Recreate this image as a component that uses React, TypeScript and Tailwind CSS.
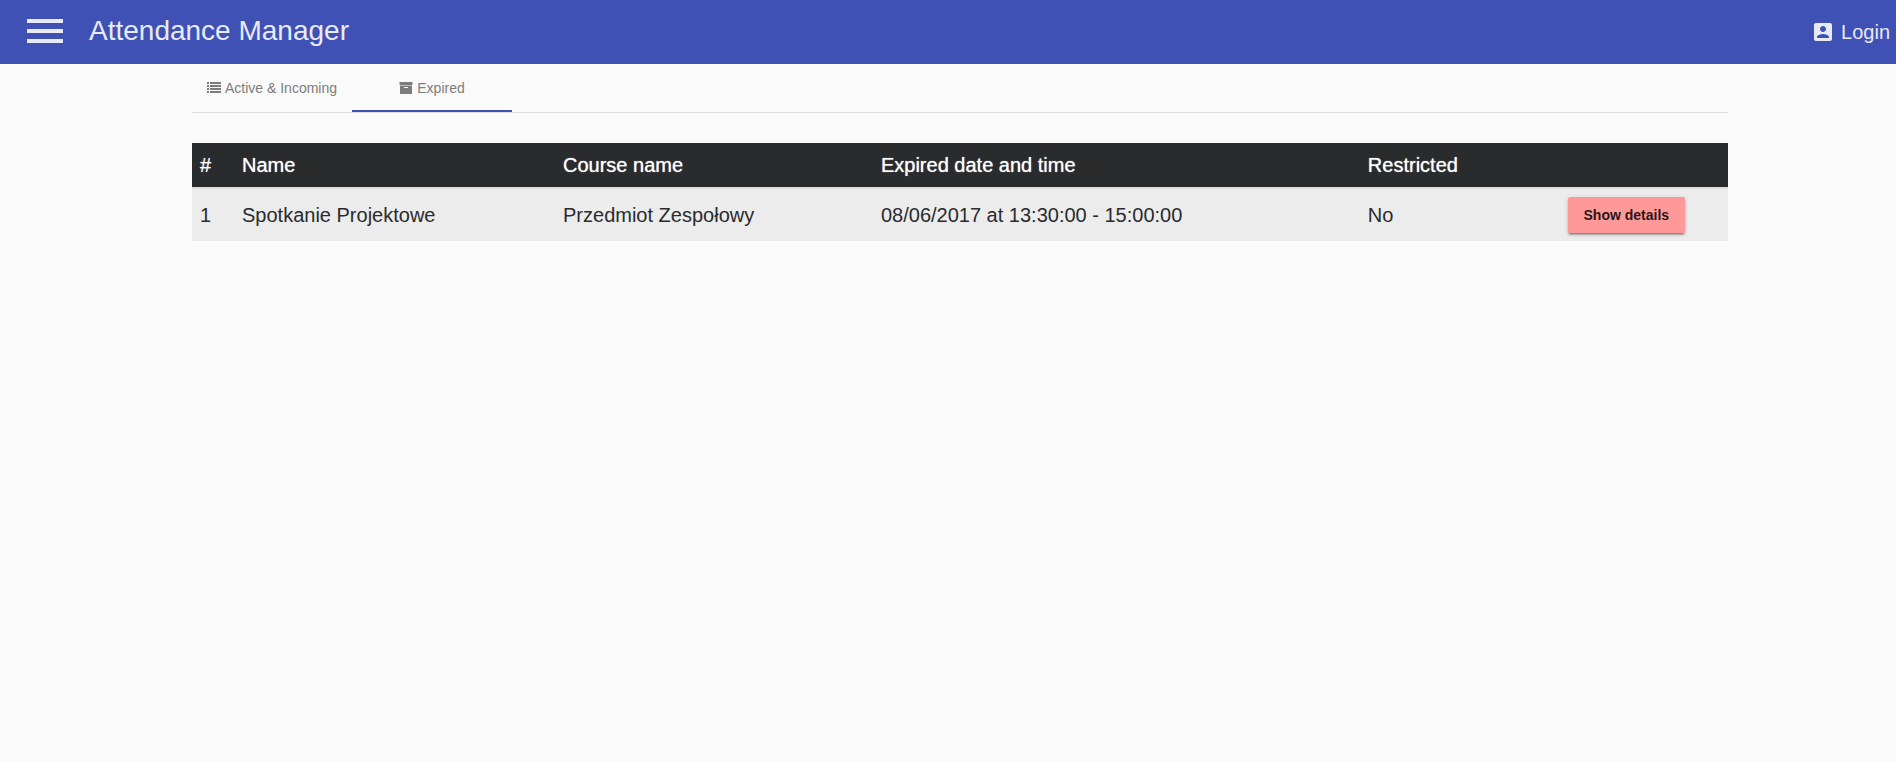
import React from "react";

type Meeting = {
  id: number;
  name: string;
  course: string;
  date: string;
  restricted: boolean;
};

const meetings: Meeting[] = [
  {
    id: 1,
    name: "Spotkanie Projektowe",
    course: "Przedmiot Zespołowy",
    date: "08/06/2017 at 13:30:00 - 15:00:00",
    restricted: false,
  },
];

function Header() {
  return (
    <header className="flex h-16 items-center bg-[#3f51b5] pr-[6px] pl-[27px] text-[#e8eaf6]">
      <div className="flex items-center gap-[26px] pb-[2px]">
        <button type="button" aria-label="Open menu" className="flex w-9 flex-col gap-[6px]">
          <span className="h-1 w-full bg-current" />
          <span className="h-1 w-full bg-current" />
          <span className="h-1 w-full bg-current" />
        </button>
        <h1 className="text-[28px] leading-8">Attendance Manager</h1>
      </div>
      <a href="#login" className="ml-auto flex items-center gap-[6px] text-xl">
        <svg viewBox="0 0 24 24" className="size-6" fill="currentColor" aria-hidden="true">
          <path d="M3 5v14c0 1.1.89 2 2 2h14c1.1 0 2-.9 2-2V5c0-1.1-.9-2-2-2H5c-1.110 0-2 .9-2 2zm12 4c0 1.660-1.340 3-3 3s-3-1.340-3-3 1.340-3 3-3 3 1.340 3 3zm-9 8c0-2 4-3.100 6-3.100s6 1.100 6 3.100v1H6v-1z" />
        </svg>
        Login
      </a>
    </header>
  );
}

function Tabs() {
  return (
    <nav className="flex h-[49px] border-b border-[#e0e0e0] text-sm text-[#7d7d7d]">
      <a href="#active" className="flex w-40 items-center justify-center gap-1">
        <svg viewBox="0 0 14 14" className="size-[14px]" fill="currentColor" shapeRendering="crispEdges" aria-hidden="true">
          <path d="M0 1h2v2H0zM3 1h11v2H3zM0 4h2v2H0zM3 4h11v2H3zM0 7h2v2H0zM3 7h11v2H3zM0 10h2v2H0zM3 10h11v2H3z" />
        </svg>
        Active &amp; Incoming
      </a>
      <a
        href="#expired"
        aria-current="page"
        className="flex w-40 items-center justify-center gap-1 border-b-2 border-[#3f51b5] pt-[2px]"
      >
        <svg viewBox="0 0 14 14" className="size-[14px]" fill="currentColor" aria-hidden="true">
          <path fillRule="evenodd" d="M.5 1h13v3H.5zM1 4.500h12V12.500a.5.5 0 0 1-.5.5h-11a.5.5 0 0 1-.5-.5zM5 6v1h4V6z" />
        </svg>
        Expired
      </a>
    </nav>
  );
}

function MeetingsTable() {
  return (
    <table className="mt-[30px] w-full table-fixed border-collapse text-left text-xl text-[#292b2c]">
      <colgroup>
        <col className="w-[42px]" />
        <col className="w-[20.9%]" />
        <col className="w-[20.7%]" />
        <col className="w-[31.7%]" />
        <col className="w-[13%]" />
        <col />
      </colgroup>
      <thead className="bg-[#292b2c] text-white">
        <tr className="h-[45px] *:px-2 *:font-medium *:text-shadow-[0_0_1px_rgba(255,255,255,0.8)]">
          <th scope="col">#</th>
          <th scope="col">Name</th>
          <th scope="col">Course name</th>
          <th scope="col">Expired date and time</th>
          <th scope="col">Restricted</th>
          <td />
        </tr>
      </thead>
      <tbody>
        {meetings.map((m) => (
          <tr key={m.id} className="h-[53px] border-t-2 border-[#dddddd] bg-[#ececec] *:px-2">
            <td>{m.id}</td>
            <td>{m.name}</td>
            <td>{m.course}</td>
            <td>{m.date}</td>
            <td>{m.restricted ? "Yes" : "No"}</td>
            <td>
              <button
                type="button"
                className="block h-9 rounded-xs bg-[#ff9999] px-4 text-sm font-bold text-black/87 shadow-[0_3px_1px_-2px_rgba(0,0,0,0.2),0_2px_2px_rgba(0,0,0,0.24),0_1px_5px_rgba(0,0,0,0.12)]"
              >
                Show details
              </button>
            </td>
          </tr>
        ))}
      </tbody>
    </table>
  );
}

export default function App() {
  return (
    <div className="min-h-screen bg-[#fafafa] font-['Liberation_Sans',Arial,sans-serif]">
      <Header />
      <main className="pr-[168px] pl-[192px]">
        <Tabs />
        <MeetingsTable />
      </main>
    </div>
  );
}
